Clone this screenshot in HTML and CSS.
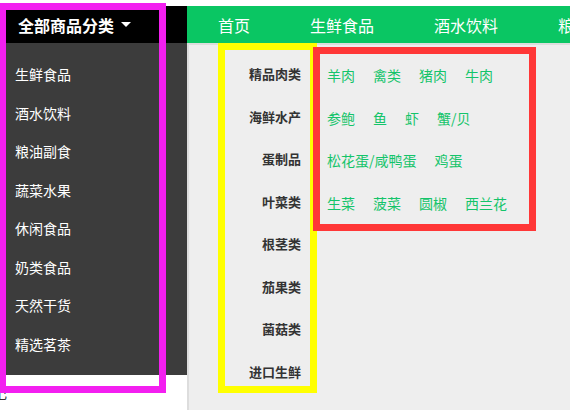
FILE: index.html
```html
<!DOCTYPE html>
<html lang="zh-CN">
<head>
<meta charset="utf-8">
<title>分类菜单</title>
<link rel="stylesheet" href="styles.css">
</head>
<body>
<div class="page">
  <header class="topbar">
    <div class="all-cat">全部商品分类<span class="caret"></span></div>
    <nav class="nav">
      <a>首页</a>
      <a>生鲜食品</a>
      <a>酒水饮料</a>
      <a>粮油副食</a>
    </nav>
  </header>
  <div class="main">
    <aside class="side">
      <ul class="menu">
        <li>生鲜食品</li>
        <li>酒水饮料</li>
        <li>粮油副食</li>
        <li>蔬菜水果</li>
        <li>休闲食品</li>
        <li>奶类食品</li>
        <li>天然干货</li>
        <li>精选茗茶</li>
      </ul>
      <div class="note">记</div>
    </aside>
    <section class="panel">
      <ul class="sub-cats">
        <li>精品肉类</li>
        <li>海鲜水产</li>
        <li>蛋制品</li>
        <li>叶菜类</li>
        <li>根茎类</li>
        <li>茄果类</li>
        <li>菌菇类</li>
        <li>进口生鲜</li>
      </ul>
      <div class="flyout">
        <div class="row"><a>羊肉</a><a>禽类</a><a>猪肉</a><a>牛肉</a></div>
        <div class="row"><a>参鲍</a><a>鱼</a><a>虾</a><a>蟹/贝</a></div>
        <div class="row"><a>松花蛋/咸鸭蛋</a><a>鸡蛋</a></div>
        <div class="row"><a>生菜</a><a>菠菜</a><a>圆椒</a><a>西兰花</a></div>
      </div>
    </section>
  </div>
  <div class="hl-menu"></div>
</div>
</body>
</html>
```

FILE: styles.css
```css
html, body {
  margin: 0;
  padding: 0;
  background: #fff;
}
body {
  font-family: "Noto Sans CJK SC", "Noto Sans", sans-serif;
  width: 570px;
  height: 410px;
  overflow: hidden;
}
.page {
  position: relative;
  padding-top: 6px;
  height: 410px;
  box-sizing: border-box;
  overflow: hidden;
}
.topbar {
  display: flex;
  height: 37px;
}
.all-cat {
  width: 187px;
  flex-shrink: 0;
  box-sizing: border-box;
  background: #000;
  color: #fff;
  font-weight: bold;
  font-size: 16px;
  display: flex;
  align-items: center;
  padding-left: 18px;
}
.caret {
  width: 0;
  height: 0;
  border-left: 5px solid transparent;
  border-right: 5px solid transparent;
  border-top: 5px solid #fff;
  margin-left: 7px;
}
.nav {
  flex: 1;
  min-width: 0;
  background: #0ac663;
  display: flex;
  align-items: center;
  padding-left: 1px;
  overflow: hidden;
  white-space: nowrap;
}
.nav a {
  flex-shrink: 0;
  padding: 0 30px;
  color: #fff;
  font-size: 16px;
}
.main {
  display: flex;
  height: 367px;
}
.side {
  width: 187px;
  flex-shrink: 0;
}
.menu {
  list-style: none;
  margin: 0;
  background: #3c3c3c;
  height: 332px;
  box-sizing: border-box;
  padding: 12px 0 0 15px;
}
.menu li {
  height: 38.5px;
  line-height: 38.5px;
  color: #fff;
  font-size: 14px;
}
.note {
  margin: 10px 0 0 -7px;
  font-size: 14px;
  line-height: 14px;
  color: #333;
}
.panel {
  flex: 1;
  background: #eee;
  border-left: 2px solid #ddd;
  border-top: 2px solid #ddd;
  display: flex;
  align-items: flex-start;
}
.sub-cats {
  list-style: none;
  margin: -2px 0 0 29px;
  width: 99px;
  height: 350px;
  box-sizing: border-box;
  border: 7px solid #ffff00;
  padding: 3px 9px 0 0;
  text-align: right;
  flex-shrink: 0;
}
.sub-cats li {
  height: 42.5px;
  line-height: 42.5px;
  font-weight: bold;
  font-size: 13px;
  color: #333;
}
.flyout {
  margin: 2px 0 0 -4px;
  width: 223px;
  height: 184px;
  box-sizing: border-box;
  border: 7px solid #ff3737;
  flex-shrink: 0;
}
.row {
  display: flex;
  align-items: center;
  height: 42.5px;
  padding-left: 7px;
  white-space: nowrap;
}
.row a {
  margin-right: 18px;
  color: #14c46a;
  font-size: 14px;
}
.hl-menu {
  position: absolute;
  left: -1px;
  top: 3px;
  width: 167px;
  height: 390px;
  box-sizing: border-box;
  border: 7px solid #f31ff0;
  pointer-events: none;
}
```
